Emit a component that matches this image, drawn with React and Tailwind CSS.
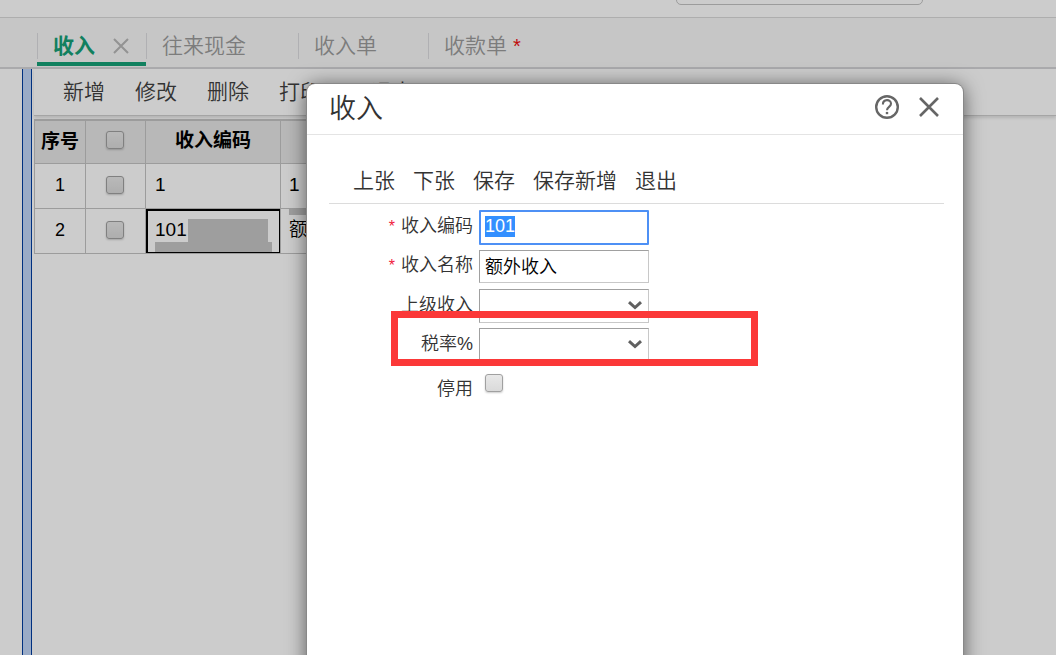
import { useEffect, useRef } from "react";

const tabs = [
    { name: "往来现金", width: "w-[152px]" },
    { name: "收入单", width: "w-[130px]" },
    { name: "收款单", width: "w-[131px]", changed: true },
];

const rows = [
    { code: "1", name: "1" },
    { code: "101", name: "额外收入", current: true },
];

function Checkbox(props) {
    return (
        <input
            type="checkbox"
            className="block size-[18px] appearance-none rounded-[3px] border border-[#a0a0a0] bg-linear-to-b from-[#e8e8e8] to-[#dadada] shadow-[0_1px_2px_rgba(0,0,0,0.2)]"
            {...props}
        />
    );
}

function Field({ id, label, required, children }) {
    return (
        <div className="flex h-[33px] items-center gap-[6px]">
            <label
                htmlFor={id}
                className="w-[144px] pb-[2px] text-right text-[18px] leading-[26px] font-[350] text-[#333]"
            >
                {required && (
                    <span className="mr-[6px] text-[16px] text-[#f0203c]">*</span>
                )}
                {label}
            </label>
            {children}
        </div>
    );
}

function Select({ id }) {
    return (
        <div className="relative w-[170px]">
            <select
                id={id}
                className="block h-[34px] w-full appearance-none border border-t-[#a0a0a0] border-r-[#c8c8c8] border-b-[#c8c8c8] border-l-[#a0a0a0] bg-white px-[5px] text-[18px]"
            >
                <option value=""></option>
            </select>
            <svg
                viewBox="0 0 14 9"
                className="pointer-events-none absolute top-[12px] right-[7px] h-[9px] w-[14px]"
                fill="none"
                stroke="#606060"
                strokeWidth="3"
            >
                <path d="M1 1.2 L7 6.6 L13 1.2" />
            </svg>
        </div>
    );
}

function TabBar() {
    return (
        <nav className="flex h-[52px] items-start border-t border-b-2 border-t-[#dadada] border-b-[#d5d5d8] bg-[#f8f8f8] pl-[37px] text-[21px] leading-[26px]">
            <div className="flex h-[48px] w-[109px] items-start border-b-4 border-[#16a077] pt-[15px]">
                <div className="flex h-[26px] w-full items-center border-l border-[#dcdce0] pl-[15px]">
                    <a href="#income" className="font-bold text-[#16a077]">
                        收入
                    </a>
                    <button aria-label="关闭" className="ml-[18px]">
                        <svg
                            viewBox="0 0 16 16"
                            className="size-[16px]"
                            stroke="#b8b8b8"
                            strokeWidth="2"
                        >
                            <path d="M1 1 L15 15 M15 1 L1 15" />
                        </svg>
                    </button>
                </div>
            </div>
            {tabs.map((tab) => (
                <div
                    key={tab.name}
                    className={`mt-[15px] flex h-[26px] items-center border-l border-[#dcdce0] pl-[15px] ${tab.width}`}
                >
                    <a href="#tab" className="font-[350] text-[#9c9c9c]">
                        {tab.name}
                    </a>
                    {tab.changed && (
                        <span className="ml-[6px] text-[20px] text-[#f01010]">*</span>
                    )}
                </div>
            ))}
        </nav>
    );
}

function IncomeTable() {
    return (
        <table className="ml-[2px] w-[660px] table-fixed border-collapse text-[19px] leading-[26px] text-black">
            <colgroup>
                <col className="w-[51px]" />
                <col className="w-[60px]" />
                <col className="w-[135px]" />
                <col />
            </colgroup>
            <thead>
                <tr className="h-[43px] border-t-2 border-t-[#c4c4c4] bg-[#e6e6e6]">
                    <th className="border border-[#c4c4c4] p-0 font-bold">序号</th>
                    <th className="border border-[#c4c4c4] pb-[3px] pl-[20px]">
                        <Checkbox aria-label="全选" />
                    </th>
                    <th className="border border-[#c4c4c4] p-0 pb-[2px] font-bold">
                        收入编码
                    </th>
                    <th className="border border-[#c4c4c4] p-0 pb-[2px] font-bold">
                        收入名称
                    </th>
                </tr>
            </thead>
            <tbody>
                {rows.map((row, index) => (
                    <tr key={row.code} className="h-[45px]">
                        <td className="border border-[#c4c4c4] pb-px text-center text-[18px]">
                            {index + 1}
                        </td>
                        <td className="border border-[#c4c4c4] pb-px pl-[20px]">
                            <Checkbox aria-label={`选择 ${row.code}`} />
                        </td>
                        <td className="relative border border-[#c4c4c4] pb-px pl-[9px]">
                            {row.code}
                            {row.current && (
                                <>
                                    <span className="absolute top-[10px] left-[42px] h-[27px] w-[80px] bg-[#c6c6c6]" />
                                    <span className="absolute top-[33px] left-[9px] h-[11px] w-[117px] bg-[#c6c6c6]" />
                                    <span className="absolute inset-0 border-2 border-r border-b border-black" />
                                </>
                            )}
                        </td>
                        <td className="relative border border-[#c4c4c4] pb-px pl-[8px] font-[350]">
                            {row.name}
                            {row.current && (
                                <span className="absolute top-0 left-[8px] h-[6px] w-[40px] bg-[#c6c6c6]" />
                            )}
                        </td>
                    </tr>
                ))}
            </tbody>
        </table>
    );
}

function IncomeDialog() {
    const codeRef = useRef(null);

    useEffect(() => {
        codeRef.current.focus();
        codeRef.current.select();
    }, []);

    return (
        <section
            role="dialog"
            aria-label="收入"
            className="min-h-screen rounded-t-[8px] bg-white shadow-[0_0_0_1px_#888,0_2px_20px_rgba(0,0,0,0.6)]"
        >
            <header className="flex h-[51px] items-center border-b border-[#e4e4e4] pr-[24px] pl-[22px]">
                <h1 className="flex-1 text-[27px] leading-[34px] font-[350] text-[#333]">
                    收入
                </h1>
                <button aria-label="帮助" className="mb-[4px]">
                    <svg viewBox="0 0 24 24" className="size-[24px]" fill="none" stroke="#666">
                        <circle cx="12" cy="12" r="10.8" strokeWidth="2.4" />
                        <path
                            d="M7.9 9.4 C7.9 3.8 16 3.8 16 8.7 C16 11.8 12 11.9 12 15.2"
                            strokeWidth="2.1"
                        />
                        <path d="M12 16.9 V19.2" strokeWidth="2.4" />
                    </svg>
                </button>
                <button aria-label="关闭" className="mb-[4px] ml-[20px]">
                    <svg viewBox="0 0 20 20" className="size-[20px]" stroke="#666" strokeWidth="2.6">
                        <path d="M1 1 L19 19 M19 1 L1 19" />
                    </svg>
                </button>
            </header>

            <div className="pr-[19px] pl-[22px]">
                {/* Toolbar */}
                <div className="flex h-[69px] items-end gap-[18px] border-b border-[#dcdcdc] pb-[8px] pl-[24px] text-[21px] leading-[28px] font-[350] text-[#333]">
                    <button>上张</button>
                    <button>下张</button>
                    <button>保存</button>
                    <button>保存新增</button>
                    <button>退出</button>
                </div>

                {/* Form */}
                <form className="relative space-y-[6px] pt-[7px]">
                    <Field id="code" label="收入编码" required>
                        <input
                            id="code"
                            ref={codeRef}
                            defaultValue="101"
                            className="h-[35px] w-[170px] rounded-[1px] border-2 border-[#4d90f5] px-[4px] pb-[2px] text-[18px] leading-[20px] text-black outline-none selection:bg-[#338fff] selection:text-white"
                        />
                    </Field>
                    <Field id="name" label="收入名称" required>
                        <input
                            id="name"
                            defaultValue="额外收入"
                            className="h-[33px] w-[170px] border border-t-[#a0a0a0] border-r-[#c8c8c8] border-b-[#c8c8c8] border-l-[#a0a0a0] px-[5px] pb-[3px] text-[18px] font-[350] text-black outline-none"
                        />
                    </Field>
                    <Field id="parent" label="上级收入">
                        <Select id="parent" />
                    </Field>
                    <Field id="tax" label="税率%">
                        <Select id="tax" />
                    </Field>
                    <div className="flex items-start gap-[12px] pt-[7px]">
                        <label
                            htmlFor="disabled"
                            className="w-[144px] pt-[2px] text-right text-[18px] leading-[26px] font-[350] text-[#333]"
                        >
                            停用
                        </label>
                        <Checkbox id="disabled" />
                    </div>
                    <div className="pointer-events-none absolute top-[107px] left-[62px] h-[55px] w-[367px] border-[7px] border-[#fb3838]" />
                </form>
            </div>
        </section>
    );
}

function App() {
    return (
        <div className="relative flex h-screen flex-col overflow-hidden bg-white font-['Liberation_Sans','Noto_Sans_CJK_SC',sans-serif]">
            <div className="flex h-[17px] shrink-0 items-end justify-end overflow-hidden pr-[133px] pb-[12px]">
                <input
                    aria-label="搜索"
                    className="h-[30px] w-[247px] shrink-0 rounded-[5px] border border-[#c4c4c4] outline-none"
                />
            </div>
            <TabBar />
            <div className="flex flex-1">
                <aside className="w-[22px]" />
                <div className="w-[10px] border-x border-[#003d9f] bg-[#c1d6f8]" />
                <main className="flex-1">
                    <div className="mb-[3px] ml-[2px] flex h-[47px] items-center gap-[30px] border-b border-[#cfcfcf] pl-[29px] text-[21px] leading-[28px] font-[350] text-[#404040] shadow-[0_2px_3px_rgba(0,0,0,0.12)]">
                        <button>新增</button>
                        <button>修改</button>
                        <button>删除</button>
                        <button>打印</button>
                        <button className="ml-[20px]">退出</button>
                    </div>
                    <IncomeTable />
                </main>
            </div>

            {/* Overlay */}
            <div className="absolute inset-0 bg-black/20 pt-[84px] pr-[93px] pl-[307px]">
                <IncomeDialog />
            </div>
        </div>
    );
}

export default App;
